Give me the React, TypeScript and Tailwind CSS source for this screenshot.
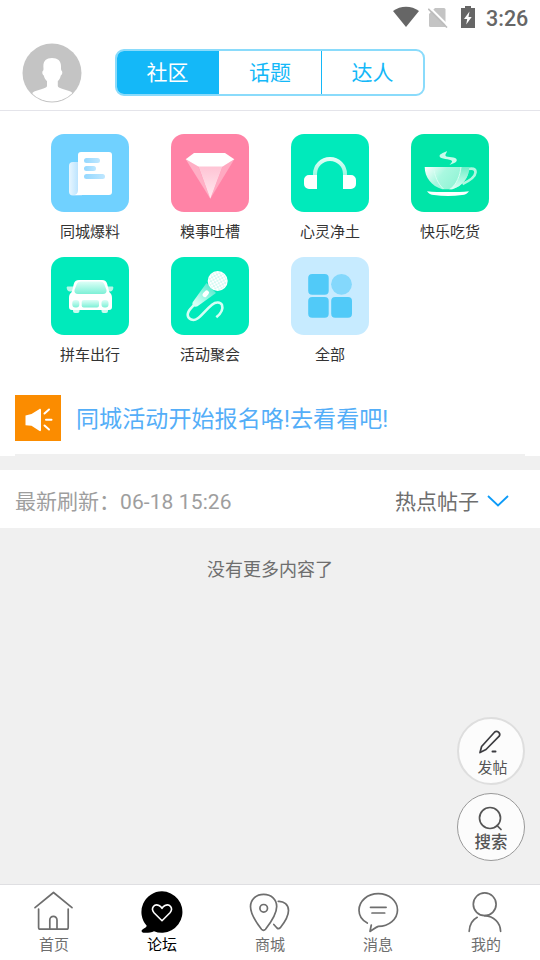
import { ReactNode } from "react";

const NewsIcon = () => (
  <svg viewBox="0 0 78 78" className="size-[78px]">
    <defs>
      <linearGradient id="newsFold" x1="0" y1="0" x2="1" y2="0">
        <stop offset="0" stopColor="#e8f6ff" />
        <stop offset="1" stopColor="#a9ddff" />
      </linearGradient>
      <linearGradient id="newsLine" x1="0" y1="0" x2="1" y2="0">
        <stop offset="0" stopColor="#94d8ff" />
        <stop offset="1" stopColor="#bfe7ff" />
      </linearGradient>
    </defs>
    <path d="M22 28h9v33.500h-9a4 4 0 0 1-4-4V32a4 4 0 0 1 4-4z" fill="url(#newsFold)" />
    <path d="M30 18h28a3 3 0 0 1 3 3v37a3 3 0 0 1-3 3H22c3.500 0 5-2 5-5V21a3 3 0 0 1 3-3z" fill="#fff" />
    <rect x="33" y="24" width="16" height="5" rx="2.500" fill="url(#newsLine)" />
    <rect x="33" y="32" width="12" height="5" rx="2.500" fill="url(#newsLine)" />
    <rect x="33" y="40" width="21" height="5" rx="2.500" fill="url(#newsLine)" />
  </svg>
);

const DiamondIcon = () => (
  <svg viewBox="0 0 78 78" className="size-[78px]">
    <defs>
      <linearGradient id="gem" x1="0" y1="0" x2="0" y2="1">
        <stop offset="0" stopColor="#ffc3d4" />
        <stop offset="1" stopColor="#ffe9ef" />
      </linearGradient>
    </defs>
    <path d="M14.700 25.300 27.300 32.300 39.300 64.700z" fill="#ffafc5" />
    <path d="M63.300 25.300 51.700 32.300 39.300 64.700z" fill="#ffa9c1" />
    <path d="M27.300 32h24.400L39.300 64.700z" fill="url(#gem)" />
    <path d="M14.700 25.300 23 19h31l9.300 6.300-11.600 7.200H27.300z" fill="#fff" />
  </svg>
);

const HeadphoneIcon = () => (
  <svg viewBox="0 0 78 78" className="size-[78px]">
    <defs>
      <linearGradient id="band" x1="0" y1="23" x2="0" y2="43" gradientUnits="userSpaceOnUse">
        <stop offset="0" stopColor="#e6fff9" />
        <stop offset="1" stopColor="#9af6df" />
      </linearGradient>
    </defs>
    <path d="M24 43v-3a15 15 0 0 1 30 0v3" fill="none" stroke="url(#band)" strokeWidth="4" />
    <path d="M18 41h8v14h-8a5 5 0 0 1-5-5v-4a5 5 0 0 1 5-5zM52 41h8a5 5 0 0 1 5 5v4a5 5 0 0 1-5 5h-8z" fill="#fff" />
  </svg>
);

const CupIcon = () => (
  <svg viewBox="0 0 78 78" className="size-[78px]">
    <defs>
      <linearGradient id="cup" x1="0" y1="0" x2="1" y2="0.400">
        <stop offset="0" stopColor="#fff" />
        <stop offset="0.450" stopColor="#a9f8e0" />
        <stop offset="1" stopColor="#8cf3d3" />
      </linearGradient>
      <linearGradient id="cupSide" x1="0" y1="0" x2="0" y2="1">
        <stop offset="0" stopColor="#6eefc8" />
        <stop offset="1" stopColor="#dffff6" />
      </linearGradient>
    </defs>
    <path d="M36 17c-2 1.200-7 2.500-7.500 5 .3 3.800 11 2.600 12.500 5 .4 1.600-1.500 2.500-2.500 4 2.700-1.400 7.300-2.300 7.300-5-.3-3.600-9.800-2-11.300-4.200-.6-1.700 1.500-3 1.500-4.800z" fill="#c9fbeb" />
    <path d="M57 35c4-1 7.800-.5 7.500 3.500-.4 5-6.500 8.500-13 11.500" fill="none" stroke="#b0f8e1" strokeWidth="2.700" />
    <path d="M13.700 33h44.500c0 10.500-6.500 19-17 22.300h-10C20.500 52 13.700 43.500 13.700 33z" fill="url(#cup)" />
    <path d="M50 33h8.200c0 10.500-6.500 19-17 22.300h-3C46 50 49.500 42 50 33z" fill="url(#cupSide)" />
    <path d="M22.500 33c1 9 4.500 17 10 22M50 33c-1 9-4.500 17-10 22" fill="none" stroke="#d8fff4" strokeWidth="1" />
    <path d="M16 57.200c12 1.200 30 1.200 42 0-1.500 2.500-4 3.400-7 3.900-9 1.300-19 1.300-28 0-3-.5-5.500-1.400-7-3.900z" fill="#fff" />
  </svg>
);

const CarIcon = () => (
  <svg viewBox="0 0 78 78" className="size-[78px]">
    <defs>
      <linearGradient id="glass" x1="0" y1="0" x2="0" y2="1">
        <stop offset="0" stopColor="#dcfff7" />
        <stop offset="1" stopColor="#7df0d6" />
      </linearGradient>
    </defs>
    <path d="M17 29.500h6v5h-4c-2 0-3-1.500-3.300-3.500-.2-1 .3-1.500 1.300-1.500zM61 29.500h-6v5h4c2 0 3-1.500 3.300-3.500.2-1-.3-1.500-1.300-1.500z" fill="#b5f8e9" />
    <rect x="22" y="50" width="6.500" height="6" rx="2" fill="#c9fbef" />
    <rect x="50.500" y="50" width="6.500" height="6" rx="2" fill="#c9fbef" />
    <path d="M28 23h23c3 0 4.500 1.300 5.200 4l2 8c2 1.500 2.800 3 2.800 6v9a3 3 0 0 1-3 3H21a3 3 0 0 1-3-3v-9c0-3 .8-4.500 2.800-6l2-8c.7-2.700 2.200-4 5.200-4z" fill="#fff" />
    <path d="M30 24.500h19c2.500 0 3.700 1 4.400 3l2.100 5.500c.4 2.500-1 4-3.500 4H27c-2.500 0-3.900-1.500-3.500-4l2.100-5.500c.7-2 1.900-3 4.400-3z" fill="url(#glass)" />
    <rect x="21.300" y="43" width="7" height="7.500" rx="3" fill="url(#glass)" />
    <rect x="30.700" y="43" width="17.300" height="7.500" rx="2" fill="url(#glass)" />
    <rect x="50.500" y="43" width="7" height="7.500" rx="3" fill="url(#glass)" />
  </svg>
);

const MicIcon = () => (
  <svg viewBox="0 0 78 78" className="size-[78px]">
    <defs>
      <linearGradient id="micBody" x1="0.800" y1="0.200" x2="0.200" y2="0.900">
        <stop offset="0" stopColor="#5eecd0" />
        <stop offset="1" stopColor="#d6fff6" />
      </linearGradient>
      <pattern id="micDots" width="4" height="4" patternUnits="userSpaceOnUse" patternTransform="rotate(15)">
        <circle cx="1" cy="1" r="0.700" fill="#86efdc" />
        <circle cx="3" cy="3" r="0.700" fill="#86efdc" />
      </pattern>
    </defs>
    <path d="M23 48c-2.500 3-6.500 5.500-6.300 10 .3 4.500 5.800 6.500 9.800 3.500C31.500 58 35 52.500 41 47.700c4-3.200 8.500-2.700 10 .3 1.500 4.500-1 8.500-5.700 12.300" fill="none" stroke="#d4fff5" strokeWidth="2.600" />
    <path d="M35.500 26 45 36 26.500 49.300c-1.500.8-3 .5-4.200-.6-1.200-1.100-1.200-2.700-.3-4z" fill="url(#micBody)" />
    <rect x="31" y="34.500" width="7.500" height="4.600" rx="2.300" fill="#fff" transform="rotate(-48 34.700 36.800)" />
    <circle cx="46.700" cy="24" r="10" fill="#fff" />
    <circle cx="46.700" cy="24" r="9" fill="url(#micDots)" />
  </svg>
);

const AllIcon = () => (
  <svg viewBox="0 0 78 78" className="size-[78px]">
    <rect x="17.200" y="17" width="20.500" height="20.800" rx="4" fill="#51caf8" />
    <circle cx="50.500" cy="27.300" r="10.400" fill="#84d8fc" />
    <rect x="17.200" y="40" width="20.500" height="20.800" rx="4" fill="#51caf8" />
    <rect x="40.200" y="40" width="20.800" height="20.800" rx="4" fill="#51caf8" />
  </svg>
);

const categories = [
  { label: "同城爆料", bg: "bg-[#70d1ff]", icon: <NewsIcon /> },
  { label: "糗事吐槽", bg: "bg-[#ff83a6]", icon: <DiamondIcon /> },
  { label: "心灵净土", bg: "bg-[#00eabb]", icon: <HeadphoneIcon /> },
  { label: "快乐吃货", bg: "bg-[#00e5a8]", icon: <CupIcon /> },
  { label: "拼车出行", bg: "bg-[#00eabb]", icon: <CarIcon /> },
  { label: "活动聚会", bg: "bg-[#00eabb]", icon: <MicIcon /> },
  { label: "全部", bg: "bg-[#c7ebff]", icon: <AllIcon /> },
];

const StatusBar = () => (
  <div className="flex h-9 items-center justify-end pr-3 text-[#666]">
    <svg viewBox="0 0 26 22" className="mb-0.5 h-[22px] w-[26px]">
      <path d="M0 5C7.500-.8 18.500-.8 26 5L13 21z" fill="#666" />
    </svg>
    <svg viewBox="0 0 20 20" className="ml-[9px] h-5 w-5">
      <path d="M7 0h9a1.500 1.500 0 0 1 1.500 1.500V19H2.500a1.500 1.500 0 0 1-1.500-1.500V6z" fill="#c4c4c4" />
      <path d="M1.500-.700 20.500 18.300" stroke="#fff" strokeWidth="2.200" />
      <path d="M.3.800 19 19.500" stroke="#bdbdbd" strokeWidth="1.700" />
    </svg>
    <svg viewBox="0 0 14 22" className="mb-0.5 ml-[13px] h-[22px] w-[14px]">
      <path d="M4 0h6v2h4v20H0V2h4z" fill="#666" />
      <path d="M8.500 5.500 3 13h3.200L5.200 18.500l5.500-7.500H7.500z" fill="#fff" />
    </svg>
    <span className="ml-[11px] mt-0.5 w-[42px] text-right text-[21.500px] font-medium leading-none">3:26</span>
  </div>
);

const Header = () => (
  <header className="flex h-[75px] items-center border-b border-[#e4e4ea] pl-[22px]">
    <svg viewBox="0 0 60 60" className="size-[60px]">
      <defs>
        <clipPath id="avatar">
          <circle cx="30" cy="30" r="28.500" />
        </clipPath>
      </defs>
      <circle cx="30" cy="30" r="29.500" fill="#c4c4c4" />
      <path
        clipPath="url(#avatar)"
        d="M30 15c6 0 9.300 3 9 9-.1 1.500 0 2.500.4 3.500 1.500.8 1 4-.6 5-.5 2.500-1.500 4.300-3 5.700V43c0 3 10.500 3.500 14.500 6.700L49 60H11l-.5-10.300C14.500 46.500 25 46 25 43v-4.800c-1.500-1.400-2.700-3.200-3.200-5.700-1.600-1-2.100-4.200-.6-5 .4-1 .3-2 .2-3.500-.3-6 2.600-9 8.600-9z"
        fill="#fff"
      />
    </svg>
    <div className="mb-0.5 ml-[33px] flex h-[47px] w-[310px] overflow-hidden rounded-[9px] border-2 border-[#8adbfb] text-[21px] leading-[46px] text-[#14b8f8]">
      <div className="-my-px -ml-px w-[103px] bg-[#14b8f8] text-center text-white">社区</div>
      <div className="-my-px w-[103px] border-r border-[#14b8f8] text-center">话题</div>
      <div className="-my-px flex-1 text-center">达人</div>
    </div>
  </header>
);

const SpeakerIcon = () => (
  <svg viewBox="0 0 46 46" className="size-[46px] bg-[#fb8c00]">
    <path d="M10.500 20.500 16.500 19l7.700-4.800c1-.6 1.800-.4 1.800.8v20c0 1.200-.8 1.400-1.800.8l-7.700-5-6-.6z" fill="#fff" />
    <path d="m29.500 18.500 4.500-4M31 24.800h5.500M29.500 30.500l4.500 4" stroke="#fff" strokeWidth="2" strokeLinecap="round" />
  </svg>
);

const TabIcon = ({ children }: { children: ReactNode }) => (
  <svg
    viewBox="0 0 48 44"
    className="h-11 w-12"
    fill="none"
    stroke="#6e6e6e"
    strokeWidth="1.700"
    strokeLinecap="round"
    strokeLinejoin="round"
  >
    {children}
  </svg>
);

const tabs = [
  {
    label: "首页",
    icon: (
      <TabIcon>
        <path d="M5 17.700 23.500 2.500 42 17.700M8.600 19v18.500a1.700 1.700 0 0 0 1.700 1.700h26.200a1.700 1.700 0 0 0 1.700-1.700V19M19.800 39V30a3.600 3.600 0 0 1 7.200 0v9" />
      </TabIcon>
    ),
  },
  {
    label: "论坛",
    active: true,
    icon: (
      <TabIcon>
        <path d="M24 1.300a20.700 20.700 0 1 1-8 39.900c-3 1.300-7 2-10.500 1.500-2-.3-2.700-2.200-1-3.200 2-1.200 3.800-2 4.200-3.700A20.700 20.700 0 0 1 24 1.300z" fill="#000" stroke="none" />
        <path d="M24 30.700 16 22.800c-3.800-4.600.6-9.600 5-7.300 1.400.8 2.200 1.600 3 2.800.8-1.200 1.600-2 3-2.800 4.400-2.300 8.800 2.700 5 7.300z" stroke="#fff" strokeWidth="1.600" />
      </TabIcon>
    ),
  },
  {
    label: "商城",
    icon: (
      <TabIcon>
        <path d="M17.700 4.300C10 4.300 4.500 9.500 4.500 16.500c0 8.500 6.500 17 11 22.700 1.300 1.500 2.700 1.500 4 0 4.500-5.700 11.200-14.200 11.200-22.700 0-7-5.300-12.200-13-12.200z" />
        <circle cx="17.700" cy="18.300" r="3.800" />
        <path d="M32.300 11.400c5.700-.4 10.200 3.500 10.200 9 0 6-4 12-8.200 17.300-1.200 1.300-2.200 1.300-3.300.3l-3.200-3.500" />
      </TabIcon>
    ),
  },
  {
    label: "消息",
    icon: (
      <TabIcon>
        <path d="M13.300 33C8 30.300 5 25.500 5 20.300 5 11 13.500 3.700 24.300 3.700S43.500 11 43.500 20 35 36.400 24.300 36.400c-2.800 1-5.300 3.300-8.300 5l1.300-6.400M16.500 17.300h15.600M18 23h12.700" />
      </TabIcon>
    ),
  },
  {
    label: "我的",
    icon: (
      <TabIcon>
        <circle cx="22.700" cy="14.300" r="11.400" />
        <path d="M7.200 41.300c.2-6 3.100-11.300 8-14M22.700 25.700c9 .6 15.600 6.600 15.900 15.600" />
      </TabIcon>
    ),
  },
];

const App = () => {
  return (
    <div className="relative flex h-[960px] w-[540px] flex-col overflow-hidden bg-[#f0f0f0] font-['Roboto','Noto_Sans_CJK_SC',sans-serif]">
      <div className="bg-white">
        <StatusBar />
        <Header />

        <div className="grid grid-cols-4 px-[30px] pt-[23px]">
          {categories.map((item) => (
            <div key={item.label} className="flex h-[123px] flex-col items-center">
              <div className={`size-[78px] rounded-[13px] ${item.bg}`}>{item.icon}</div>
              <span className="mt-[9px] text-[15px] leading-[22px] text-[#333]">{item.label}</span>
            </div>
          ))}
        </div>

        <div className="mx-[15px] mt-[15px] flex h-[61px] items-start border-b-2 border-[#f0f0f0]">
          <SpeakerIcon />
          <span className="ml-[15px] text-[23px] leading-[50px] tracking-[0.1px] text-[#54aef8]">同城活动开始报名咯!去看看吧!</span>
        </div>
      </div>

      <div className="mt-[14px] flex h-[58px] items-center bg-white pl-[15px] pr-[31px] pt-1.5 text-[21px] leading-[52px]">
        <span className="text-[#9e9e9e]">
          最新刷新：<span className="tracking-[0.1px]">06-18 15:26</span>
        </span>
        <span className="ml-auto text-[#6e6e6e]">热点帖子</span>
        <svg viewBox="0 0 22 12" className="mb-0.5 ml-2 h-3 w-[22px]">
          <path d="m1 1 10 9.500L21 1" fill="none" stroke="#0d9bf8" strokeWidth="1.800" />
        </svg>
      </div>

      <p className="mt-7 text-center text-[18px] leading-7 text-[#6e6e6e]">没有更多内容了</p>

      <div className="absolute right-[15px] top-[717px] flex flex-col gap-2 text-[#555]">
        <button className="flex size-[68px] flex-col items-center rounded-full border-2 border-[#dedede] bg-[#fcfcfc]">
          <svg viewBox="0 0 24 26" className="mr-[2px] mt-[10px] h-[26px] w-6" fill="none" stroke="#3c3c40" strokeWidth="1.700" strokeLinecap="round" strokeLinejoin="round">
            <path d="m2 23.500 1.600-6L16.500 3.200c2.500-2.400 6.700.8 4.700 4L8 20.500z" />
            <path d="M14.500 22.500h3" strokeWidth="2" />
          </svg>
          <span className="ml-[3px] mt-0.5 text-[15px] leading-[22px]">发帖</span>
        </button>
        <button className="flex size-[68px] flex-col items-center rounded-full border border-[#999] bg-[#fcfcfc]">
          <svg viewBox="0 0 24 26" className="mr-[3px] mt-3 h-[26px] w-6" fill="none" stroke="#555" strokeWidth="1.700" strokeLinecap="round">
            <circle cx="12" cy="12" r="10.500" />
            <path d="m19 19.500 4 4" />
          </svg>
          <span className="text-[16.500px] font-medium leading-[22px]">搜索</span>
        </button>
      </div>

      <nav className="mt-auto grid h-[76px] grid-cols-5 border-t border-[#dfdfe2] bg-white">
        {tabs.map((tab) => (
          <div key={tab.label} className="flex flex-col items-center pt-[5px]">
            {tab.icon}
            <span className={`text-[15px] leading-[22px] ${tab.active ? "text-black" : "text-[#6e6e6e]"}`}>{tab.label}</span>
          </div>
        ))}
      </nav>
    </div>
  );
};

export default App;
